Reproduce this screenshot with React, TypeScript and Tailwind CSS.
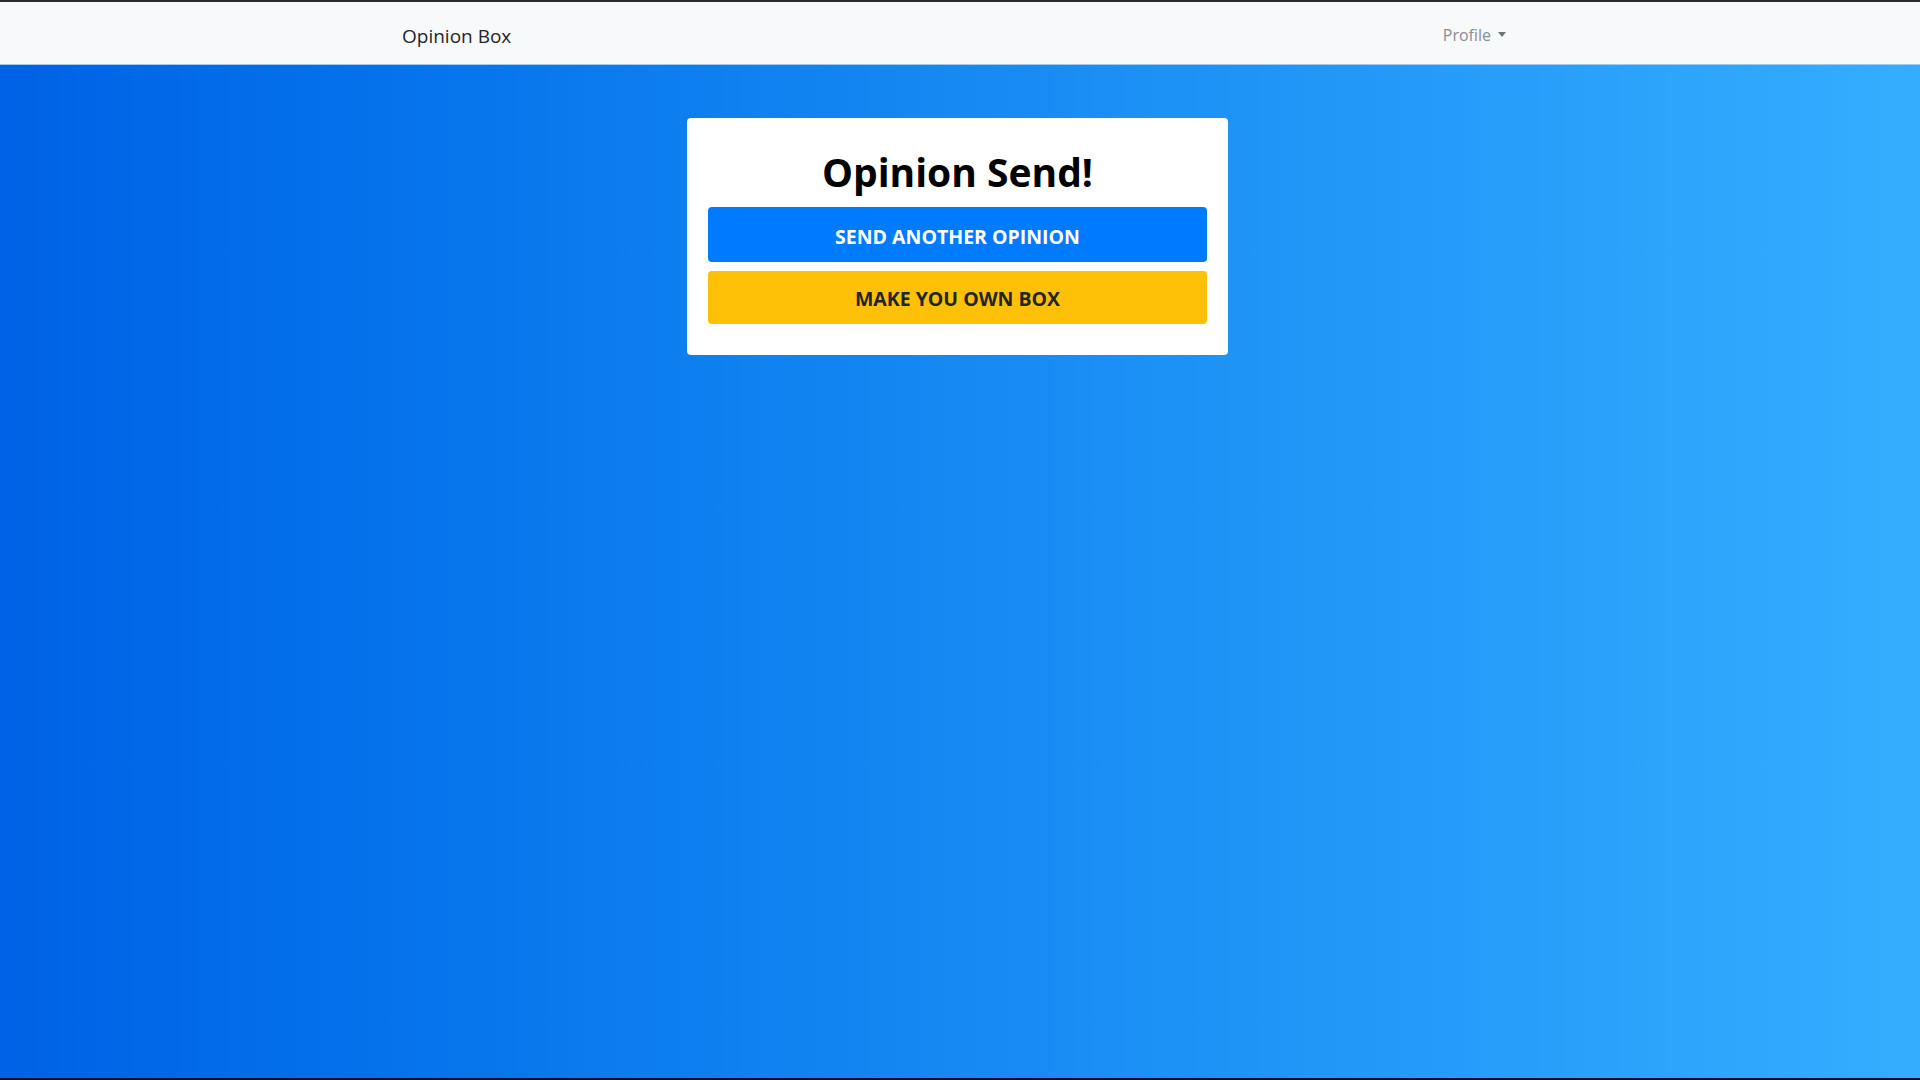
import React from 'react';

const App = () => {
    return (
        <div className="flex flex-col h-screen w-full font-['Open_Sans',sans-serif]">
            <div className="h-[2px] bg-[#2b2a2e]" />
            <nav className="h-[63px] bg-[#f8f9fa] border-b border-[#9ccaf3] flex items-center">
                <div className="w-[1116px] mx-auto flex items-center justify-between">
                    <a className="text-[19px] text-[#212529] leading-none pt-[6px]">Opinion Box</a>
                    <button className="flex items-center gap-[7px] text-[16px] text-[#8a8d91] pr-[12px] pt-[3px]">
                        Profile
                        <span className="block w-0 h-0 border-l-[4px] border-r-[4px] border-t-[5px] border-l-transparent border-r-transparent border-t-[#6c757d]" />
                    </button>
                </div>
            </nav>
            <main className="flex-1 bg-gradient-to-r from-[#0062e6] to-[#33aeff] pt-[53px] flex justify-center items-start">
                <div className="w-[541px] mr-[5px] bg-white rounded-[4px] px-[21px] pt-[24px] pb-[31px]">
                    <h1 className="text-center font-bold text-[39px] leading-[60px] text-black mb-[5px]">Opinion Send!</h1>
                    <button className="w-full h-[55px] pt-[4px] rounded-[4px] bg-[#007bff] text-white font-bold text-[19.5px] uppercase">
                        Send another opinion
                    </button>
                    <button className="w-full h-[53px] pt-[3px] mt-[9px] rounded-[4px] bg-[#ffc107] text-[#212529] font-bold text-[19.5px] uppercase">
                        Make you own box
                    </button>
                </div>
            </main>
            <div className="h-[2px] bg-[#0b1030]" />
        </div>
    );
};

export default App;
